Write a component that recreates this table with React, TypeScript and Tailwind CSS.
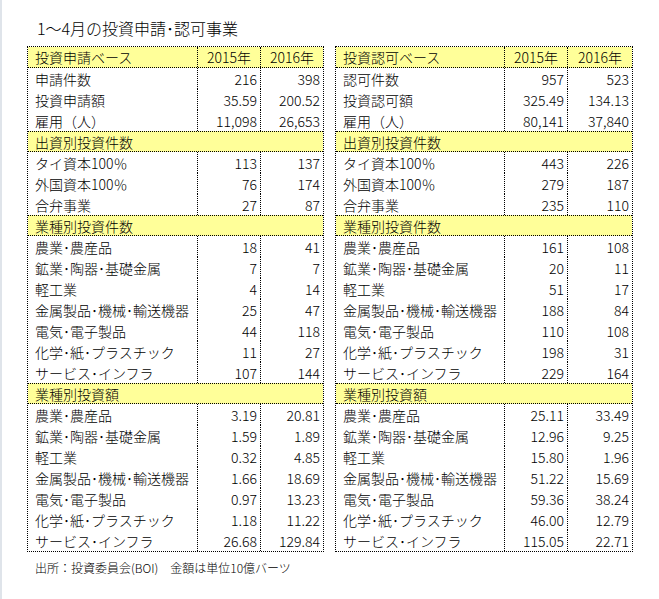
import React from "react";

type Row =
  | { kind: "head"; label: string }
  | { kind: "sec"; label: string }
  | { kind: "data"; label: string; a: string; b: string };

const D = "･";

const common = (
  a: [string, string][],
  b: [string, string][],
  c: [string, string][]
): Row[] => {
  const sec1 = ["タイ資本100％", "外国資本100％", "合弁事業"];
  const ind = [
    `農業${D}農産品`,
    `鉱業${D}陶器${D}基礎金属`,
    "軽工業",
    `金属製品${D}機械${D}輸送機器`,
    `電気${D}電子製品`,
    `化学${D}紙${D}プラスチック`,
    `サービス${D}インフラ`,
  ];
  const rows: Row[] = [];
  rows.push({ kind: "sec", label: "出資別投資件数" });
  sec1.forEach((l, i) => rows.push({ kind: "data", label: l, a: a[i][0], b: a[i][1] }));
  rows.push({ kind: "sec", label: "業種別投資件数" });
  ind.forEach((l, i) => rows.push({ kind: "data", label: l, a: b[i][0], b: b[i][1] }));
  rows.push({ kind: "sec", label: "業種別投資額" });
  ind.forEach((l, i) => rows.push({ kind: "data", label: l, a: c[i][0], b: c[i][1] }));
  return rows;
};

const leftRows: Row[] = [
  { kind: "head", label: "投資申請ベース" },
  { kind: "data", label: "申請件数", a: "216", b: "398" },
  { kind: "data", label: "投資申請額", a: "35.59", b: "200.52" },
  { kind: "data", label: "雇用（人）", a: "11,098", b: "26,653" },
  ...common(
    [
      ["113", "137"],
      ["76", "174"],
      ["27", "87"],
    ],
    [
      ["18", "41"],
      ["7", "7"],
      ["4", "14"],
      ["25", "47"],
      ["44", "118"],
      ["11", "27"],
      ["107", "144"],
    ],
    [
      ["3.19", "20.81"],
      ["1.59", "1.89"],
      ["0.32", "4.85"],
      ["1.66", "18.69"],
      ["0.97", "13.23"],
      ["1.18", "11.22"],
      ["26.68", "129.84"],
    ]
  ),
];

const rightRows: Row[] = [
  { kind: "head", label: "投資認可ベース" },
  { kind: "data", label: "認可件数", a: "957", b: "523" },
  { kind: "data", label: "投資認可額", a: "325.49", b: "134.13" },
  { kind: "data", label: "雇用（人）", a: "80,141", b: "37,840" },
  ...common(
    [
      ["443", "226"],
      ["279", "187"],
      ["235", "110"],
    ],
    [
      ["161", "108"],
      ["20", "11"],
      ["51", "17"],
      ["188", "84"],
      ["110", "108"],
      ["198", "31"],
      ["229", "164"],
    ],
    [
      ["25.11", "33.49"],
      ["12.96", "9.25"],
      ["15.80", "1.96"],
      ["51.22", "15.69"],
      ["59.36", "38.24"],
      ["46.00", "12.79"],
      ["115.05", "22.71"],
    ]
  ),
];

function Table({ rows, w1, w3 }: { rows: Row[]; w1: string; w3: string }) {
  return (
    <div className="flex flex-col border border-dotted border-black">
      {rows.map((r, i) => {
        if (r.kind === "sec") {
          return (
            <div
              key={i}
              className="flex h-[21px] items-center border-y border-dotted border-black bg-[#ffff99] pl-[7px] leading-[20px]"
            >
              {r.label}
            </div>
          );
        }
        if (r.kind === "head") {
          return (
            <div
              key={i}
              className="flex h-[21px] border-b border-dotted border-black bg-[#ffff99] leading-[20px]"
            >
              <div className={`${w1} flex items-center pl-[7px]`}>{r.label}</div>
              <div className="flex w-[63px] items-center justify-center border-l border-dotted border-black">
                2015年
              </div>
              <div className={`${w3} flex items-center justify-center border-l border-dotted border-black`}>
                2016年
              </div>
            </div>
          );
        }
        return (
          <div key={i} className="flex h-[21px] leading-[20px]">
            <div className={`${w1} flex items-center whitespace-nowrap pl-[7px]`}>{r.label}</div>
            <div className="flex w-[63px] items-center justify-end border-l border-dotted border-black pr-[3px]">
              {r.a}
            </div>
            <div className={`${w3} flex items-center justify-end border-l border-dotted border-black pr-[3px]`}>
              {r.b}
            </div>
          </div>
        );
      })}
    </div>
  );
}

export default function App() {
  return (
    <div
      className="h-[599px] w-[659px] overflow-hidden border-l-2 border-[#dfe4ea] bg-white text-[14px] font-light text-black"
      style={{ fontFamily: '"Noto Sans CJK JP", "Liberation Sans", sans-serif' }}
    >
      <div className="pl-[35px] pt-[20px] text-[16px] leading-[16px]">1～4月の投資申請･認可事業</div>
      <div className="mt-[10px] flex gap-[11px] pl-[25px]">
        <div className="w-[297px]">
          <Table rows={leftRows} w1="w-[169px]" w3="w-[63px]" />
        </div>
        <div className="w-[298px]">
          <Table rows={rightRows} w1="w-[168px]" w3="w-[65px]" />
        </div>
      </div>
      <div className="mt-[9px] pl-[33px] text-[12px] leading-[14px]">
        出所：投資委員会(BOI)　金額は単位10億バーツ
      </div>
    </div>
  );
}
